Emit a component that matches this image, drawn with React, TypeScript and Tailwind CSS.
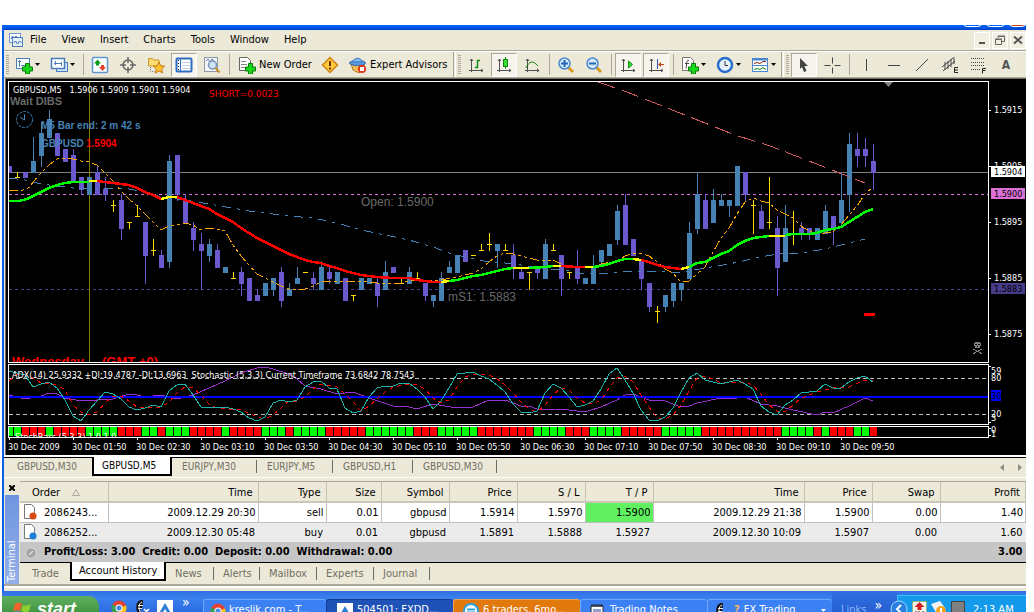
import type { ReactNode } from "react"

// kind: b = bull, p = bear, y = doji. [kind, high, top, bottom, low], a doji is [kind, high, close, low]
type Candle = [string, number, number, number, number?]

const candles: Candle[] = [
  ["p", 166, 166, 173, 173], ["y", 172, 177, 178], ["p", 172, 172, 178, 178], ["b", 137, 161, 173, 173],
  ["b", 122, 133, 156, 167], ["b", 110, 119, 138, 138], ["p", 133, 133, 156, 156], ["p", 149, 149, 162, 162],
  ["p", 149, 155, 182, 182], ["p", 177, 177, 190, 195], ["b", 177, 177, 195, 195], ["p", 166, 172, 195, 195],
  ["p", 177, 189, 195, 201], ["y", 200, 205, 212], ["p", 194, 200, 229, 240], ["y", 222, 222, 229],
  ["y", 205, 216, 217], ["p", 222, 222, 256, 284], ["y", 239, 250, 256], ["p", 250, 255, 268, 268],
  ["b", 155, 161, 262, 268], ["p", 155, 155, 195, 201], ["p", 194, 200, 223, 223], ["p", 222, 228, 240, 251],
  ["p", 233, 244, 251, 290], ["b", 239, 244, 256, 262], ["p", 244, 250, 268, 268], ["b", 267, 267, 273, 273],
  ["y", 272, 278, 279], ["p", 267, 272, 284, 296], ["p", 278, 278, 301, 301], ["p", 289, 295, 301, 301],
  ["b", 283, 283, 296, 296], ["b", 278, 278, 290, 296], ["p", 267, 272, 301, 307], ["b", 283, 289, 296, 296],
  ["b", 267, 278, 284, 284], ["y", 272, 272, 273], ["p", 272, 278, 284, 290], ["b", 261, 267, 290, 290],
  ["p", 266, 272, 279, 284], ["b", 272, 272, 284, 284], ["p", 278, 278, 301, 301], ["y", 295, 295, 301],
  ["b", 278, 278, 290, 290], ["b", 278, 278, 284, 284], ["p", 278, 283, 296, 307], ["b", 261, 272, 290, 290],
  ["p", 267, 267, 273, 273], ["y", 278, 283, 284], ["b", 267, 272, 284, 284], ["y", 272, 278, 279],
  ["p", 283, 283, 296, 301], ["b", 295, 295, 301, 307], ["b", 272, 278, 301, 301], ["b", 261, 267, 273, 273],
  ["b", 255, 255, 273, 273], ["p", 250, 250, 262, 262], ["y", 255, 255, 256], ["y", 244, 250, 251],
  ["y", 233, 244, 251], ["b", 244, 244, 251, 268], ["y", 244, 250, 251], ["p", 244, 255, 268, 279],
  ["p", 267, 272, 279, 279], ["y", 272, 272, 290], ["p", 267, 267, 273, 279], ["b", 239, 244, 279, 279],
  ["y", 244, 250, 251], ["p", 255, 255, 279, 296], ["y", 272, 272, 279], ["p", 250, 267, 279, 284],
  ["b", 278, 278, 284, 284], ["b", 255, 267, 284, 284], ["b", 250, 250, 262, 266], ["b", 244, 244, 256, 256],
  ["b", 205, 211, 240, 245], ["p", 194, 205, 245, 245], ["p", 239, 239, 256, 256], ["p", 261, 261, 279, 290],
  ["p", 283, 283, 307, 312], ["y", 306, 311, 323], ["b", 295, 295, 307, 312], ["b", 283, 283, 301, 307],
  ["b", 283, 283, 290, 301], ["b", 222, 233, 279, 279], ["b", 172, 194, 229, 234], ["p", 194, 200, 229, 229],
  ["b", 189, 200, 223, 223], ["b", 194, 200, 206, 206], ["b", 200, 200, 206, 217], ["b", 166, 166, 206, 206],
  ["p", 172, 172, 195, 201], ["y", 200, 205, 234], ["p", 205, 211, 229, 229], ["y", 177, 222, 229],
  ["p", 216, 228, 268, 296], ["b", 205, 228, 262, 262], ["y", 211, 233, 245], ["p", 222, 228, 234, 240],
  ["p", 228, 228, 234, 240], ["b", 228, 228, 240, 240], ["b", 205, 211, 234, 234], ["p", 216, 216, 229, 245],
  ["b", 172, 200, 223, 228], ["b", 133, 144, 195, 212], ["p", 133, 149, 156, 167], ["p", 138, 149, 156, 167],
  ["p", 144, 161, 173, 190],
]

const trend: [string, string][] = [
  ["#00ff00", "9,201 19,201 27,199 33,196 41,192 49,188 57,185 65,183 73,182 89,182"],
  ["#ffff00", "89,181 97,181"],
  ["#ff0000", "97,181 105,182 113,183 121,184 129,185 137,188 145,192 153,195 161,199"],
  ["#ffff00", "161,199 169,197 177,197"],
  ["#ff0000", "177,197 185,200 193,203 201,206 209,209 217,214 225,218 233,222 241,228 249,233 257,238 265,242 273,246 281,250 289,254 297,257 305,260 313,262 321,263 329,266 337,268 345,271 353,273 361,275 369,276 377,277 393,278 409,278 417,280 425,281 433,282 441,282"],
  ["#ffff00", "441,282 449,281"],
  ["#00ff00", "449,281 457,280 465,278 473,276 481,275 489,273 497,271 505,269 513,268"],
  ["#ffff00", "513,268 529,268"],
  ["#00ff00", "529,268 545,267 553,266"],
  ["#ffff00", "553,266 561,266"],
  ["#ff0000", "561,266 577,267 585,267"],
  ["#ffff00", "585,267 593,267"],
  ["#00ff00", "593,267 601,266 609,264 617,261 625,259 633,259"],
  ["#ffff00", "633,259 641,260"],
  ["#ff0000", "641,260 649,262 657,265 665,267 673,268 681,269"],
  ["#ffff00", "681,269 689,267"],
  ["#00ff00", "689,267 697,263 705,262 713,258 721,254 729,251 737,245 745,241 753,238 761,237 769,236"],
  ["#ffff00", "769,236 785,236"],
  ["#00ff00", "785,235 793,234 809,234 817,233 825,230 833,229 841,227 849,222 857,217 865,212 873,209"],
]

const fastMa =
  "9,190 23,190 30,187 33,182 41,173 49,165 57,159 65,158 73,159 81,161 89,162 97,165 105,173 113,181 121,191 129,199 137,206 145,214 153,222 161,230 169,226 177,225 185,223 193,225 201,230 209,228 225,231 233,245 241,256 249,265 257,274 265,278 273,282 281,286 289,289 305,289 313,286 321,282 345,281 361,281 377,283 385,284 401,283 409,281 417,280 441,280 457,277 465,275 473,273 481,269 489,262 497,256 505,253 513,254 529,258 537,260 553,260 561,264 569,267 577,268 593,267 601,264 617,261 625,256 633,253 641,253 649,256 657,262 665,269 673,273 677,278 681,282 689,281 697,274 705,267 713,252 721,238 729,228 737,214 745,202 753,198 761,201 769,203 777,210 785,214 793,218 801,226 809,231 817,234 833,232 841,225 849,215 857,206 865,194 873,187"
const slowMa =
  "9,178 25,180 41,184 65,187 73,188 97,188 129,189 145,192 161,197 185,200 209,204 249,211 289,216 313,218 337,223 361,230 385,235 409,240 433,247 449,253 465,257 489,262 505,263 521,265 545,269 561,269 585,274 609,273 633,271 657,271 673,273 689,271 705,268 729,264 761,257 777,254 801,253 825,249 841,245 857,241 865,239"

const stochMain =
  "9,371 17,373 25,375 33,387 41,384 49,382 57,388 65,400 73,416 81,421 89,410 97,401 105,392 113,394 121,399 129,407 137,410 145,408 153,405 161,407 169,391 177,385 185,384 193,395 201,407 209,408 225,407 233,409 241,412 249,418 257,421 265,417 273,403 281,400 289,402 297,400 305,387 313,382 321,381 329,388 337,389 345,408 353,413 361,411 369,397 377,388 385,386 393,386 401,383 409,383 417,389 425,397 433,409 441,401 449,388 457,374 473,372 481,376 489,379 497,385 505,392 513,404 521,412 529,413 537,411 545,393 553,384 561,388 569,397 577,407 585,405 593,401 601,389 609,374 617,368 625,380 633,393 641,410 649,420 657,421 665,417 673,408 681,392 689,378 697,373 705,380 713,382 721,384 737,380 745,384 753,389 761,406 769,412 777,415 785,405 793,400 801,393 817,391 825,384 833,388 841,388 849,382 857,378 865,376 873,382"
const stochSignal =
  "9,381 17,375 25,374 33,378 41,383 57,385 65,390 73,405 81,412 89,415 97,412 105,403 113,396 121,396 129,401 137,407 145,408 161,407 169,402 177,393 185,387 193,388 201,395 209,404 217,408 241,410 249,413 257,417 265,419 273,415 281,408 289,401 297,401 305,397 313,389 321,384 337,387 345,394 353,402 361,411 369,406 377,399 385,392 393,387 409,384 417,385 425,389 433,398 441,403 449,400 457,387 465,377 473,374 489,375 497,379 505,385 513,393 521,402 529,409 537,412 545,405 553,395 561,388 569,390 577,398 585,403 593,404 601,400 609,388 617,378 625,376 633,382 641,395 649,407 657,418 665,419 673,415 681,405 689,391 697,378 705,376 713,379 721,383 737,382 745,382 753,385 761,394 769,405 777,411 785,412 793,405 801,398 817,392 833,388 849,387 865,380 873,381"
const adx =
  "9,395 25,399 41,396 49,393 57,394 65,398 81,401 97,400 113,399 129,394 137,395 145,397 161,395 177,399 193,395 209,388 225,381 241,373 257,368 265,367 273,369 289,374 297,379 305,386 321,389 337,394 345,393 353,392 369,398 393,406 409,407 417,409 433,404 457,408 473,407 489,400 505,400 521,406 529,406 537,409 561,409 585,412 601,407 617,400 625,395 633,394 649,400 665,401 681,407 689,406 697,403 721,398 729,399 745,397 761,404 777,406 793,410 817,415 825,412 833,413 849,406 865,398 873,401"

// run lengths of the stochastic bars, green first
const barRuns = [2, 3, 1, 4, 4, 3, 2, 1, 3, 4, 1, 4, 3, 1, 4, 5, 6, 3, 5, 7, 4, 3, 4, 5, 5, 10, 4, 1, 1, 3, 2, 1]
const bars = barRuns.flatMap((n, i) => Array(n).fill(i % 2 === 0 ? "#00ff00" : "#ff0000"))

const times = ["2009", "01:50", "02:30", "03:10", "03:50", "04:30", "05:10", "05:50", "06:30", "07:10", "07:50", "08:30", "09:10", "09:50"]

function CandleShape({ c, x }: { c: Candle; x: number }) {
  if (c[0] === "y") {
    return (
      <g fill="#ffd700">
        <rect x={x} y={c[1]} width={1} height={c[3] - c[1]} />
        <rect x={x - 2} y={c[2]} width={5} height={1} />
      </g>
    )
  }
  return (
    <g fill={c[0] === "b" ? "#4682b4" : "#6a5acd"}>
      <rect x={x} y={c[1]} width={1} height={c[4]! - c[1]} />
      <rect x={x - 2} y={c[2]} width={5} height={c[3] - c[2]} />
    </g>
  )
}

function PricePane() {
  return (
    <svg className="block h-[280px] w-full" aria-label="GBPUSD M5 price chart">
      <g transform="translate(-9 -82)">
        <g shapeRendering="crispEdges" fill="none">
          <path d="M9 172.500H4000" stroke="#808080" />
          <path d="M9 194.500H4000" stroke="#da70d6" strokeDasharray="3 3" />
          <path d="M9 289.500H4000" stroke="#483d8b" strokeDasharray="3 3" />
          <path d="M89.500 82V362" stroke="#808000" />
          {candles.map((c, i) => (
            <CandleShape key={i} c={c} x={9 + i * 8} />
          ))}
          <polyline points={slowMa} stroke="#4682b4" strokeDasharray="9 6 3 6" />
          <polyline points={fastMa} stroke="#ffa500" strokeDasharray="9 3 3 3 3 3" />
          <polyline points="598,82 627,92 690,117 735,135 770,146 809,161 865,183" stroke="#cd5c5c" strokeDasharray="18 7" />
          {trend.map(([color, points]) => (
            <polyline key={points} points={points} stroke={color} strokeWidth={2.5} />
          ))}
          <path d="M864 314.500h11" stroke="#ff0000" strokeWidth={3} />
        </g>
        <path d="M884 82h9l-4.500 5z" fill="#808080" />
        <g fill="#808080" shapeRendering="crispEdges">
          <path d="M975 342h5v1h1v3h-1v2h-5v-2h-1v-3h1z" />
          <path d="M973 349h2v1h-2zM980 349h2v1h-2zM975 350h2v1h-2zM978 350h2v1h-2zM976 351h3v1h-3zM974 352h2v1h-2zM979 352h2v1h-2zM973 353h2v1h-2zM980 353h2v1h-2z" />
          <path d="M975 344h2v1h-2zM978 344h2v1h-2zM977 346h1v1h-1z" fill="#000" />
        </g>
        <g stroke="#4682b4" fill="none">
          <circle cx="24.500" cy="119.500" r="8" strokeDasharray="3 1" />
          <path d="M24.500 114v6L20 117" />
        </g>
        <text x="13" y="93" fill="#fff" className="font-['DejaVu_Sans_Condensed','DejaVu_Sans',sans-serif] text-[9px]">
          GBPUSD,M5&nbsp;&nbsp; 1.5906 1.5909 1.5901 1.5904
        </text>
        <text x="209" y="97" fill="#ff0000" className="font-['DejaVu_Sans',sans-serif] text-[9px]">SHORT=0.0023</text>
        <g className="font-['Liberation_Sans',sans-serif] text-[10px] font-bold">
          <text x="10" y="105" fill="#696969" className="text-[11px]">Wait DIBS</text>
          <text x="41" y="129" fill="#4682b4">M5 Bar end: 2 m 42 s</text>
          <text x="41" y="147" fill="#4682b4">GBPUSD</text>
          <text x="86" y="147" fill="#ff0000">1.5904</text>
        </g>
        <g className="font-['Liberation_Sans',sans-serif] text-[12px]" fill="#696969">
          <text x="361" y="206">Open: 1.5900</text>
          <text x="448" y="301">mS1: 1.5883</text>
        </g>
        <g className="font-['Liberation_Sans',sans-serif] text-[13px] font-bold" fill="#ff0000">
          <text x="12" y="366">Wednesday</text>
          <text x="102" y="366">(GMT +0)</text>
        </g>
      </g>
    </svg>
  )
}

function StochPane() {
  return (
    <svg className="block h-[59px] w-full" aria-label="ADX and Stochastic">
      <g transform="translate(-9 -365)">
        <g shapeRendering="crispEdges" fill="none">
          <path d="M9 378.500H4000M9 414.500H4000" stroke="#c0c0c0" strokeDasharray="4 3" />
          <polyline points={adx} stroke="#9932cc" />
          <path d="M9 397H4000" stroke="#0000ff" strokeWidth={2} />
          <polyline points={stochSignal} stroke="#ff0000" strokeDasharray="4 4" />
          <polyline points={stochMain} stroke="#20b2aa" />
        </g>
        <text x="12" y="378" fill="#fff" className="font-['DejaVu_Sans_Condensed','DejaVu_Sans',sans-serif] text-[9px]">
          ADX(14) 25.9332 +DI:19.4787 -DI:13.6963&nbsp; Stochastic (5,3,3) Current Timeframe 73.6842 78.7543
        </text>
      </g>
    </svg>
  )
}

function BarsPane() {
  return (
    <svg className="block h-[10px] w-full" aria-label="Stochastic bars">
      <g transform="translate(-9 -427)" shapeRendering="crispEdges">
        {bars.map((color, i) => (
          <rect key={i} x={6 + i * 8} y={427} width={7} height={9} fill={color} />
        ))}
        <text x="15" y="440" fill="#fff" className="font-['DejaVu_Sans_Condensed','DejaVu_Sans',sans-serif] text-[9px]">
          StochBars (5,3,3) 1.0 1.0
        </text>
      </g>
    </svg>
  )
}

const prices: [string, number][] = [
  ["1.5915", 110],
  ["1.5905", 166],
  ["1.5895", 222],
  ["1.5885", 278],
  ["1.5875", 334],
]

function PriceScale() {
  return (
    <svg
      className="block h-[357px] w-[37px] shrink-0 font-['DejaVu_Sans_Condensed','DejaVu_Sans',sans-serif] text-[9px]"
      aria-label="Price scale"
    >
      <g transform="translate(-989 -81)" fill="#fff">
        {prices.map(([label, y]) => (
          <g key={label}>
            <rect x="989" y={y} width="2" height="1" />
            <text x="994" y={y + 3}>{label}</text>
          </g>
        ))}
        <rect x="991" y="166" width="34" height="11" />
        <text x="994" y="175" fill="#000">1.5904</text>
        <rect x="991" y="188" width="34" height="11" fill="#da70d6" />
        <text x="994" y="197" fill="#000">1.5900</text>
        <rect x="991" y="283" width="34" height="11" fill="#483d8b" />
        <text x="994" y="292" fill="#000">1.5883</text>
        <text x="991" y="374">59</text>
        <text x="991" y="381">80</text>
        <rect x="991" y="390" width="10" height="11" fill="#0000ff" />
        <text x="991" y="399" fill="#000">30</text>
        <text x="991" y="417">20</text>
        <text x="991" y="421">3</text>
        <text x="991" y="433">0</text>
        <text x="991" y="437">1</text>
        <path d="M989 366h2v1h-2zM989 422h2v1h-2zM989 428h2v1h-2zM989 435h2v1h-2z" />
      </g>
    </svg>
  )
}

function Icon({ children, label, w = 18 }: { children: ReactNode; label?: string; w?: number }) {
  return (
    <svg width={w} height="18" viewBox={`0 0 ${w} 18`} fill="none" className="block shrink-0" aria-label={label}>
      {children}
    </svg>
  )
}

const plus = <path d="M10.500 7.500h4v3.500h3v4h-3v3h-4v-3h-3v-4h3z" fill="#19d719" stroke="#087808" />

function Caret() {
  return (
    <svg width="5" height="3" viewBox="0 0 5 3" className="block shrink-0">
      <path d="M0 0h5L2.500 3z" fill="#000" />
    </svg>
  )
}

function Tool({ children, label, pressed, menu }: { children: ReactNode; label: string; pressed?: boolean; menu?: boolean }) {
  if (menu) {
    return (
      <button aria-label={label} className="flex w-[35px] shrink-0 items-center justify-center gap-[2px]">
        {children}
        <Caret />
      </button>
    )
  }
  return (
    <button aria-label={label} className="flex w-7 shrink-0 items-center justify-center">
      <span
        className={
          pressed
            ? "flex h-6 w-[26px] items-center justify-center border border-[#aca899] border-r-white border-b-white bg-[#f6f4ec]"
            : "flex h-6 w-[26px] items-center justify-center"
        }
      >
        {children}
      </span>
    </button>
  )
}

function Sep() {
  return (
    <span className="flex w-[6px] shrink-0 items-center justify-center">
      <span className="h-[21px] w-px bg-[#aca899]" />
    </span>
  )
}

function Grip() {
  return (
    <span className="flex w-[6px] shrink-0 items-center justify-center">
      <svg width="3" height="20">
        <path d="M1.500 0V20" stroke="#aca899" strokeWidth="3" strokeDasharray="1 1" />
      </svg>
    </span>
  )
}

const axes = <path d="M4.500 3V16M2 14.500H16M3 5l1.500-2L6 5M14 13l2 1.500-2 1.500" stroke="#505050" />

function Toolbar() {
  return (
    <div className="flex h-[27px] items-stretch overflow-hidden border-t border-b border-t-white border-b-[#aca899] bg-[#ece9d8] text-[11px] text-black">
      <Grip />
      <Tool label="New Chart" menu>
        <Icon>
          <rect x="1.500" y="2.500" width="13" height="10" fill="#fff" stroke="#4a7ebb" />
          <path d="M4.500 4v7M3 5.500h3M6 9.500h7" stroke="#4a7ebb" />
          {plus}
        </Icon>
      </Tool>
      <Tool label="Profiles" menu>
        <Icon>
          <rect x="6.500" y="6.500" width="11" height="9" fill="#cfe2f8" stroke="#4a7ebb" />
          <rect x="1.500" y="2.500" width="13" height="10" fill="#fff" stroke="#4a7ebb" strokeWidth="1.500" />
          <path d="M4 7.500h8M5.500 5v4M11.500 6v4" stroke="#4a7ebb" />
        </Icon>
      </Tool>
      <Sep />
      <Tool label="Market Watch">
        <Icon>
          <rect x="1.500" y="1.500" width="15" height="15" rx="1" fill="#fff" stroke="#5b96d6" strokeWidth="1.500" />
          <path d="M3 7.500L6.500 3.500l3.500 4H8v2H5v-2z" fill="#0b9b1a" />
          <path d="M8 11l3.500 4 3.500-4h-2V9h-3v2z" fill="#e0452a" />
        </Icon>
      </Tool>
      <Tool label="Data Window">
        <Icon>
          <circle cx="9" cy="9" r="5" stroke="#666" strokeWidth="1.500" />
          <path d="M9 1v6M9 11v6M1 9h6M11 9h6" stroke="#666" strokeWidth="1.500" />
        </Icon>
      </Tool>
      <Tool label="Favorites">
        <Icon>
          <path d="M1.500 2.500h4l1.500 1.500h5v6H1.500z" fill="#fbdc74" stroke="#c9992a" />
          <path d="M3.500 11v4.500h4" stroke="#777" strokeDasharray="1 1" />
          <path d="M12 6l1.700 3.700 4 .4-3 2.800.8 4L12 15l-3.500 2 .8-4-3-2.800 4-.5z" fill="#ffc02e" stroke="#c37c10" />
        </Icon>
      </Tool>
      <Tool label="Navigator" pressed>
        <Icon>
          <rect x="1.500" y="2.500" width="15" height="13" rx="1" fill="#fff" stroke="#2d6cc0" strokeWidth="2" />
          <path d="M5.500 3v12" stroke="#2d6cc0" />
          <path d="M3.500 4v10" stroke="#222" strokeDasharray="1 2" />
          <path d="M7 6.500h8M7 9.500h8M7 12.500h8" stroke="#c3d4ea" />
        </Icon>
      </Tool>
      <Tool label="Strategy Tester">
        <Icon>
          <rect x="1.500" y="1.500" width="13" height="14" fill="#f3f5f8" stroke="#8b98a8" />
          <path d="M3 5l2-2 2 3 2-3 3 3" stroke="#5b7fa8" />
          <circle cx="9.500" cy="9" r="4" fill="#cfe2f8" stroke="#7b94b4" strokeWidth="1.500" />
          <path d="M12.500 12l4 4.500" stroke="#c58a1a" strokeWidth="2" />
        </Icon>
      </Tool>
      <Sep />
      <button className="flex w-[84px] shrink-0 items-center gap-[3px] pl-[6px] whitespace-nowrap">
        <Icon>
          <path d="M1.500 1.500h8l3 3v10h-11z" fill="#fff" stroke="#666" />
          <path d="M3 5.500h5M3 8.500h6M3 11.500h4" stroke="#888" />
          {plus}
        </Icon>
        <span className="pt-[2px]">New Order</span>
      </button>
      <Tool label="MetaEditor">
        <Icon>
          <path d="M9 1.500L16.500 9 9 16.500 1.500 9z" fill="#ffc83a" stroke="#d18312" strokeWidth="1.500" />
          <path d="M9 5v5M9 11.500v2" stroke="#6b3300" strokeWidth="2" />
        </Icon>
      </Tool>
      <button className="flex w-[109px] shrink-0 items-center gap-[3px] pl-[5px] whitespace-nowrap">
        <Icon>
          <path d="M2 8h13v4l-5 5-6-3z" fill="#f1bd58" stroke="#b47d22" />
          <ellipse cx="8.500" cy="7" rx="8" ry="2.500" fill="#5a9be0" stroke="#2c66ac" />
          <path d="M4 6c0-5 9-5 9 0z" fill="#7db5ef" stroke="#3b78bf" />
          <circle cx="13" cy="13" r="4" fill="#e0331c" />
          <rect x="11" y="11" width="4" height="4" fill="#fff" />
        </Icon>
        <span className="pt-[2px]">Expert Advisors</span>
      </button>
      <span className="w-[3px] shrink-0 border-r border-l border-l-[#aca899] border-r-white" />
      <Grip />
      <Tool label="Bar Chart">
        <Icon>
          {axes}
          <path d="M10.500 4v8M10 4.500h3M8 11.500h3" stroke="#118a11" strokeWidth="1.500" />
        </Icon>
      </Tool>
      <Tool label="Candlesticks" pressed>
        <Icon>
          {axes}
          <path d="M10.500 1v12" stroke="#118a11" />
          <rect x="8.500" y="3.500" width="4" height="7" fill="#35e035" stroke="#118a11" />
        </Icon>
      </Tool>
      <Tool label="Line Chart">
        <Icon>
          {axes}
          <path d="M3 12c3-7 7-8 12-2" stroke="#118a11" />
        </Icon>
      </Tool>
      <Sep />
      <Tool label="Zoom In">
        <Icon>
          <path d="M11 11l5 5" stroke="#d89b1c" strokeWidth="3" />
          <circle cx="7.500" cy="7.500" r="5.500" fill="#d3e8fb" stroke="#4b8ad0" strokeWidth="1.500" />
          <path d="M4 7.500h7M7.500 4v7" stroke="#2566b8" strokeWidth="2" />
        </Icon>
      </Tool>
      <Tool label="Zoom Out">
        <Icon>
          <path d="M11 11l5 5" stroke="#d89b1c" strokeWidth="3" />
          <circle cx="7.500" cy="7.500" r="5.500" fill="#d3e8fb" stroke="#4b8ad0" strokeWidth="1.500" />
          <path d="M4 7.500h7" stroke="#2566b8" strokeWidth="2" />
        </Icon>
      </Tool>
      <Sep />
      <Tool label="Auto Scroll" pressed>
        <Icon>
          {axes}
          <path d="M9.500 5l4 3.500-4 3.500z" fill="#35e035" stroke="#118a11" />
        </Icon>
      </Tool>
      <Tool label="Chart Shift" pressed>
        <Icon>
          {axes}
          <path d="M10.500 3v10" stroke="#2856b0" />
          <path d="M11 8.500l3-2.500v2h3v1h-3v2z" fill="#c0440c" />
        </Icon>
      </Tool>
      <Sep />
      <Tool label="Indicators" menu>
        <Icon>
          <path d="M1.500 1.500h8l3 3v10h-11z" fill="#fff" stroke="#777" />
          <path d="M8 4.500c-3-1-2 3-3 8M4 7.500h4" stroke="#444" />
          {plus}
        </Icon>
      </Tool>
      <Tool label="Periodicity" menu>
        <Icon>
          <circle cx="9" cy="9" r="7" fill="#e6f1fc" stroke="#2a6fd0" strokeWidth="2.500" />
          <path d="M9 5v4.500h3" stroke="#333" />
        </Icon>
      </Tool>
      <Tool label="Templates" menu>
        <Icon>
          <rect x="1.500" y="2.500" width="15" height="13" fill="#fff" stroke="#4a86cc" />
          <path d="M1 3.500h16" stroke="#4a86cc" strokeWidth="2" />
          <path d="M1 9.500h16" stroke="#4a86cc" />
          <path d="M3 7.500l3-1 3 1 3-2 3 0" stroke="#8b2510" />
          <path d="M3 13.500l3-1 3 1 3-2 3 2" stroke="#118a11" />
        </Icon>
      </Tool>
      <span className="w-[3px] shrink-0 border-r border-l border-l-[#aca899] border-r-white" />
      <Grip />
      <Tool label="Cursor" pressed>
        <Icon>
          <path d="M5 2l8 8H9.500l2 5-2.500 1-2-5L5 13z" fill="#444" />
        </Icon>
      </Tool>
      <Tool label="Crosshair">
        <Icon>
          <path d="M9.500 1.500v6M9.500 11.500v6M1.500 9.500h6M11.500 9.500h6" stroke="#444" />
        </Icon>
      </Tool>
      <Sep />
      <Tool label="Vertical Line">
        <Icon>
          <path d="M9.500 3v12" stroke="#444" />
        </Icon>
      </Tool>
      <Tool label="Horizontal Line">
        <Icon>
          <path d="M3 9.500h12" stroke="#444" />
        </Icon>
      </Tool>
      <Tool label="Trendline">
        <Icon>
          <path d="M3 15L15 3" stroke="#444" />
        </Icon>
      </Tool>
      <Tool label="Equidistant Channel">
        <Icon>
          <path d="M1 11L12 2M2 15L14 5M4 6v8M7 5v8M10 3v8M13 1v7" stroke="#444" />
          <path d="M17 11.500h-3.500v5H17M13.500 14H17" stroke="#222" />
        </Icon>
      </Tool>
      <Tool label="Fibonacci Retracement">
        <Icon>
          <path d="M2 2.500h14M2 6.500h14M2 9.500h14M2 13.500h9" stroke="#444" strokeDasharray="1 1" />
          <path d="M17 12.500h-3.500v5M13.500 14.500h3" stroke="#222" />
        </Icon>
      </Tool>
      <button aria-label="Text" className="w-7 shrink-0 text-[12px] font-bold text-[#555]">A</button>
    </div>
  )
}

const mdi = "flex h-[17px] w-4 items-center justify-center border border-white bg-[#f1efe2]"

function MenuBar() {
  return (
    <div className="flex h-[21px] items-center border-b border-[#aca899] bg-[#ece9d8] pl-[5px] text-[11px] text-black">
      <Icon label="Chart window" w={14}>
        <rect x="0.500" y="2.500" width="11" height="9" fill="#fff" stroke="#6a97d8" />
        <rect x="3.500" y="6.500" width="10" height="9" fill="#e6f0fc" stroke="#4a7ebb" />
        <path d="M2 8l1.500-3L5 7l2-2 2 2M5 12l1.500-2 2 3 2-3 2 2" stroke="#3f72b5" />
      </Icon>
      <nav className="ml-[7px] flex gap-[15px] pt-px">
        {["File", "View", "Insert", "Charts", "Tools", "Window", "Help"].map((m) => (
          <button key={m}>{m}</button>
        ))}
      </nav>
      <div className="ml-auto flex gap-[2px]">
        <button aria-label="Minimize" className={mdi}>
          <svg width="10" height="10"><path d="M2 8h6" stroke="#555" strokeWidth="2" /></svg>
        </button>
        <button aria-label="Restore" className={mdi}>
          <svg width="10" height="10" fill="none" stroke="#666"><path d="M3 3V1.500h6.500v5H7M0.500 4.500h6v5h-6zM3 1h7M0 4h7" /></svg>
        </button>
        <button aria-label="Close" className={mdi}>
          <svg width="10" height="10"><path d="M1 1.500l8 7M9 1.500l-8 7" stroke="#555" strokeWidth="2" /></svg>
        </button>
      </div>
    </div>
  )
}

function ChartTabs() {
  const tab = "border-r border-[#716f64] pl-[10px] text-left leading-[13px] mt-[2px] h-[13px]"
  return (
    <div className="flex h-[20px] shrink-0 items-start border-t border-black bg-[#ece9d8] text-[10px] whitespace-nowrap text-[#716f64]">
      <button className="mt-[2px] h-[13px] w-[88px] pl-[13px] text-left leading-[13px]">GBPUSD,M30</button>
      <button className="-mt-px h-[19px] w-20 border-2 border-t-0 border-black bg-white pl-2 text-left text-black">GBPUSD,M5</button>
      <button className={`${tab} w-[85px]`}>EURJPY,M30</button>
      <button className={`${tab} w-[76px]`}>EURJPY,M5</button>
      <button className={`${tab} w-20`}>GBPUSD,H1</button>
      <button className={`${tab} w-[84px]`}>GBPUSD,M30</button>
      <span className="mt-[6px] mr-1 ml-auto flex gap-[14px]">
        <svg width="4" height="7"><path d="M4 0v7L0 3.500z" fill="#8f8d82" /></svg>
        <svg width="4" height="7"><path d="M0 0v7l4-3.500z" fill="#8f8d82" /></svg>
      </span>
    </div>
  )
}

const columns = ["Time", "Type", "Size", "Symbol", "Price", "S / L", "T / P", "Time", "Price", "Swap", "Profit"]
const orders = [
  { id: "2086243...", dot: "#d9480f", cells: ["2009.12.29 20:30", "sell", "0.01", "gbpusd", "1.5914", "1.5970", "1.5900", "2009.12.29 21:38", "1.5900", "0.00", "1.40"] },
  { id: "2086252...", dot: "#1c7ed6", cells: ["2009.12.30 05:48", "buy", "0.01", "gbpusd", "1.5891", "1.5888", "1.5927", "2009.12.30 10:09", "1.5907", "0.00", "1.60"] },
]

function Terminal() {
  const tab = "h-[13px] border-r border-[#716f64] pl-[9px] text-left leading-[13px]"
  return (
    <div className="flex h-[107px] shrink-0 border-t border-white bg-[#ece9d8] pt-[3px] text-[11px] text-black">
      <aside className="flex w-4 shrink-0 flex-col px-px">
        <button aria-label="Close terminal" className="flex h-[14px] items-center justify-center">
          <svg width="6" height="6"><path d="M0 0l6 6M6 0L0 6" stroke="#000" strokeWidth="2" /></svg>
        </button>
        <div className="flex h-[89px] items-center bg-gradient-to-b from-[#93afe8] to-[#6f94e0] pt-[2px] leading-[14px] text-white [writing-mode:vertical-rl] rotate-180">
          Terminal
        </div>
      </aside>
      <div className="min-w-0 flex-1 border-t border-[#aca899]">
        <table className="w-full table-fixed border-collapse whitespace-nowrap">
          <colgroup>
            <col className="w-[88px]" />
            <col className="w-[150px]" />
            <col className="w-[68px]" />
            <col className="w-[55px]" />
            <col className="w-[68px]" />
            <col className="w-[68px]" />
            <col className="w-[68px]" />
            <col className="w-[68px]" />
            <col className="w-[151px]" />
            <col className="w-[68px]" />
            <col className="w-[68px]" />
            <col />
          </colgroup>
          <thead>
            <tr className="h-5 border-b-2 border-[#cbc7b8]">
              <th className="border-r border-[#c5c2b2] p-0 pt-px pl-3 text-left leading-[17px] font-normal">
                <span className="flex items-center gap-3">
                  Order
                  <svg width="8" height="7" fill="none"><path d="M0.500 6.500h7L4 0.500z" stroke="#aca899" /></svg>
                </span>
              </th>
              {columns.map((c, i) => (
                <th key={i} className="border-r border-[#c5c2b2] p-0 pt-px pr-[5px] text-right leading-[17px] font-normal">{c}</th>
              ))}
            </tr>
          </thead>
          <tbody>
            {orders.map((o, r) => (
              <tr key={o.id} className={r === 0 ? "h-5 border-b border-[#c0c0c0] bg-white" : "h-5 bg-[#ebebeb]"}>
                <td className={r === 0 ? "border-r border-[#c0c0c0] p-0" : "p-0"}>
                  <span className="flex items-center gap-[6px] pl-[2px]">
                    <Icon w={16}>
                      <path d="M2.500 1.500h7l3 3v11h-10z" fill="#fff" stroke="#777" />
                      <circle cx="11" cy="13" r="3.500" fill={o.dot} />
                    </Icon>
                    <span className="pt-px">{o.id}</span>
                  </span>
                </td>
                {o.cells.map((c, i) => (
                  <td
                    key={i}
                    className={
                      r === 1 ? "p-0 pt-px pr-[3px] text-right"
                        : i === 6 ? "border-r border-[#c0c0c0] bg-[#60f060] p-0 pt-px pr-[2px] text-right"
                        : "border-r border-[#c0c0c0] p-0 pt-px pr-[2px] text-right"
                    }
                  >
                    {c}
                  </td>
                ))}
              </tr>
            ))}
            <tr className="h-[20px] bg-[#c6c6c6] font-bold">
              <td colSpan={11} className="p-0 pt-px">
                <span className="flex items-center gap-[9px] pl-[7px]">
                  <svg width="8" height="8" fill="none"><circle cx="4" cy="4" r="3.500" stroke="#8a8a8a" fill="#b0b0b0" /><path d="M2 6l4-4" stroke="#eee" /></svg>
                  <span>Profit/Loss: 3.00&nbsp; Credit: 0.00&nbsp; Deposit: 0.00&nbsp; Withdrawal: 0.00</span>
                </span>
              </td>
              <td className="p-0 pt-px pr-[3px] text-right">3.00</td>
            </tr>
          </tbody>
        </table>
        <div className="flex items-start border-t border-black whitespace-nowrap text-[#716f64]">
          <button className="mt-1 h-[13px] w-[50px] pl-3 text-left leading-[13px]">Trade</button>
          <button className="-mt-px h-[19px] w-24 border-2 border-t-0 border-black bg-white pl-[7px] text-left leading-[17px] text-black">
            Account History
          </button>
          <button className={`${tab} mt-1 w-12`}>News</button>
          <button className={`${tab} mt-1 w-[46px]`}>Alerts</button>
          <button className={`${tab} mt-1 w-[57px]`}>Mailbox</button>
          <button className={`${tab} mt-1 w-[57px]`}>Experts</button>
          <button className={`${tab} mt-1 w-14`}>Journal</button>
        </div>
      </div>
    </div>
  )
}

function Chrome() {
  return (
    <svg width="16" height="16" viewBox="0 0 16 16" className="shrink-0">
      <circle cx="8" cy="8" r="7.500" fill="#e34133" />
      <path d="M8 8L1.500 4.500A7.500 7.500 0 0 0 7 15.500z" fill="#30a14e" />
      <path d="M8 8l-1 7.500A7.500 7.500 0 0 0 15 5.500z" fill="#fbc814" />
      <circle cx="8" cy="8" r="3.500" fill="#fff" />
      <circle cx="8" cy="8" r="2.500" fill="#4488e8" />
    </svg>
  )
}

function Fxdd() {
  return (
    <svg width="16" height="16" viewBox="0 0 16 16" className="shrink-0">
      <rect width="16" height="16" fill="#fff" />
      <path d="M8 3L1.500 14H5l3-5 3 5h3.500z" fill="#2d7fd6" />
    </svg>
  )
}

function Quill() {
  return (
    <svg width="16" height="16" viewBox="0 0 16 16" fill="none" className="shrink-0">
      <path d="M9 1C2 2 2 12 9 15M3 5h6M3 8h5" stroke="#111" strokeWidth="3" />
      <path d="M8 2C4 3 4 11 8 14M4 5.500h5M4 8.500h4" stroke="#f4f4f4" />
      <path d="M10 9l5 5M15 9l-5 5" stroke="#fff" strokeWidth="1.500" />
    </svg>
  )
}

function Taskbar() {
  const task = "flex h-[22px] shrink-0 items-center overflow-hidden rounded-t-[3px] border-t border-l"
  return (
    <footer className="flex h-[30px] items-start bg-gradient-to-b from-[#2f6fe0] via-[#3a80ee] via-25% to-[#245edb] text-[11px] whitespace-nowrap text-white">
      <button className="mt-[5px] flex h-[26px] w-[97px] shrink-0 items-center gap-[5px] rounded-tr-[10px] bg-gradient-to-b from-[#5fae5f] to-[#2f8a30] pl-[10px] font-['Liberation_Sans',sans-serif] text-[18px] leading-none font-bold italic">
        <svg width="20" height="18" viewBox="0 0 20 18" className="mt-1">
          <path d="M3 2c3-2 5-1 7 0L8 9C6 8 4 8 1 9z" fill="#f2642c" />
          <path d="M11 3c2 1 4 1 8-1l-2 7c-3 2-5 1-8 0z" fill="#8ed02f" />
          <path d="M1 10c3-1 5-1 7 0l-2 7c-2-1-4-1-6 0z" fill="#4b8df2" />
          <path d="M9 11c2 1 4 1 7-1l-2 7c-3 2-5 1-7 0z" fill="#ffc91f" />
        </svg>
        start
      </button>
      <div className="mt-[9px] flex w-[104px] shrink-0 items-center gap-[7px] pl-[12px]">
        <Chrome />
        <Quill />
        <Fxdd />
        <span className="-mt-3 pl-[2px] text-[14px] leading-none">»</span>
      </div>
      <button className={`${task} mt-2 w-[123px] gap-[3px] border-[#6fa8ff] bg-[#3c81f3] pl-[6px]`}><Chrome />kreslik.com - T...</button>
      <button className={`${task} mt-2 w-[127px] gap-1 border-[#123a90] bg-[#1e52b7] pl-[10px]`}><Fxdd />504501: FXDD...</button>
      <button className={`${task} mt-2 w-[127px] gap-1 border-[#f4a24a] bg-[#e2790c] pl-[9px]`}>
        <svg width="16" height="16" viewBox="0 0 16 16" className="shrink-0">
          <circle cx="8" cy="8" r="7" fill="#fff" stroke="#2ba3e0" strokeWidth="2" />
          <path d="M4 6.500h8M4 9.500h8" stroke="#2ba3e0" strokeWidth="2" />
        </svg>
        6 traders, 6mo...
      </button>
      <button className={`${task} mt-2 w-[127px] gap-[6px] border-[#6fa8ff] bg-[#3c81f3] pl-[9px]`}>
        <svg width="14" height="16" viewBox="0 0 14 16" className="shrink-0">
          <path d="M1 3h12v13H1z" fill="#fff" stroke="#223" />
          <path d="M2 1v3M4 1v3M6 1v3M8 1v3M10 1v3M12 1v3" stroke="#222" />
          <path d="M3 7h8M3 9h8M3 11h8" stroke="#2b3f9e" />
        </svg>
        Trading Notes
      </button>
      <button className={`${task} mt-2 w-[125px] gap-1 border-[#6fa8ff] bg-[#3c81f3] px-[6px]`}>
        <Quill />
        <b className="text-[#ffb35c]">?</b>
        FX Trading
        <svg width="5" height="3" className="ml-auto"><path d="M0 0h5L2.500 3z" fill="#fff" /></svg>
      </button>
      <div className="flex h-full flex-1 bg-gradient-to-b from-[#2f6fe0] to-[#2259cc] pt-3 pl-[9px]">
        <a href="#links" className="leading-[13px] text-[#8db8ff]">Links</a>
        <span className="-mt-[5px] pl-2 text-[14px] leading-none">»</span>
      </div>
      <div className="mt-1 flex h-[26px] w-[129px] shrink-0 items-center gap-1 border-t border-l border-[#3dc0ff] bg-[#139aea]">
        <svg width="18" height="18" viewBox="0 0 18 18" className="-ml-2 shrink-0">
          <circle cx="9" cy="9" r="8" fill="#2a7fe0" stroke="#9fd4ff" />
          <path d="M11 5L7 9l4 4" fill="none" stroke="#fff" strokeWidth="2" />
        </svg>
        <svg width="15" height="16" viewBox="0 0 15 16" className="shrink-0">
          <rect width="15" height="16" fill="#f4f4e8" stroke="#2a7a2a" />
          <path d="M7.500 1l5 5h-3v3h-4V6h-3z" fill="#d42020" />
          <path d="M4 10v5M7 10v5M11 10v5" stroke="#222" />
        </svg>
        <svg width="16" height="16" viewBox="0 0 16 16" className="shrink-0">
          <path d="M0 3l9-3 5 7-8 6z" fill="#eef2f6" />
          <circle cx="10" cy="10" r="5" fill="#f6a31c" />
          <path d="M10 7v6" stroke="#fff" strokeWidth="2" />
        </svg>
        <span className="h-4 w-[14px] shrink-0 border border-[#444] bg-[#808080]" />
        <time className="ml-1 pt-1">2:13 AM</time>
      </div>
    </footer>
  )
}

export default function App() {
  return (
    <div className="h-screen overflow-hidden bg-white pt-[25px] pr-2 pl-[2px] font-['DejaVu_Sans_Condensed','DejaVu_Sans',sans-serif]">
      <div className="border-l-2 border-[#0a5fe8]">
        <div className="flex h-[5px] justify-end gap-1 overflow-hidden bg-gradient-to-b from-[#0068ff] to-[#0043c8]">
          <span className="-mt-1 h-[6px] w-[19px] rounded-b border border-white" />
          <span className="-mt-1 h-[6px] w-[19px] rounded-b border border-white" />
          <span className="-mt-1 h-[6px] w-[17px] rounded-b border border-white bg-[#c8401c]" />
        </div>
        <MenuBar />
        <Toolbar />
        <div className="border-l border-[#ece9d8]">
          <main className="border-t border-l border-[#716f64] bg-black pt-[2px] pl-[2px]">
            <div className="flex">
              <div className="flex min-w-0 flex-1 flex-col gap-px">
                <div className="border border-white"><PricePane /></div>
                <div className="border border-white"><StochPane /></div>
                <div className="border border-white"><BarsPane /></div>
              </div>
              <PriceScale />
            </div>
            <div className="flex h-[17px] overflow-hidden text-[9px] whitespace-nowrap text-white">
              {times.map((t) => (
                <span key={t} className="w-16 shrink-0 leading-[14px]">
                  <span className="ml-px block h-[2px] w-px bg-white" />
                  <span className="block">30 Dec {t}</span>
                </span>
              ))}
            </div>
          </main>
        </div>
        <div className="h-[2px] bg-white" />
        <ChartTabs />
        <Terminal />
        <div className="h-[7px] border-t-2 border-b-[3px] border-t-[#aca899] border-b-[#ece9d8] bg-white" />
      </div>
      <Taskbar />
    </div>
  )
}
